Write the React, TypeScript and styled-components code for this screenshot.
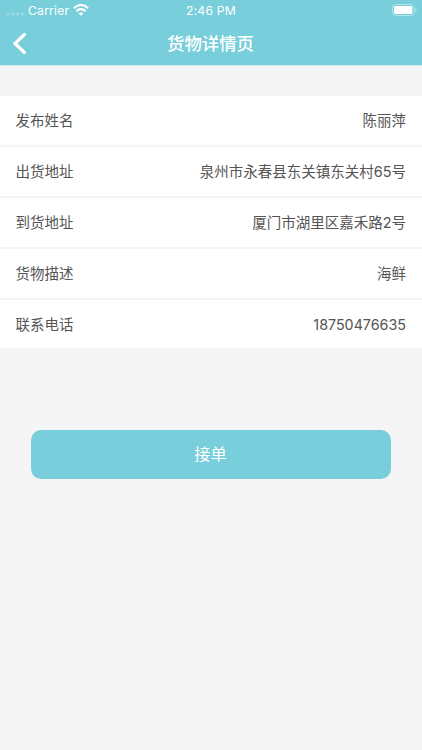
import React from "react";
import styled, { createGlobalStyle } from "styled-components";

const GlobalStyle = createGlobalStyle`
  * { box-sizing: border-box; }
  body { margin: 0; background: #f5f5f5; }
`;
const Screen = styled.div`
  width: 100%;
  height: 750px;
  background: #f5f5f5;
  color: #555;
  font-family: Inter, "Noto Sans CJK SC", sans-serif;
`;
const Header = styled.header`
  height: 66px;
  background: #79cedb;
  border-bottom: 1px solid #cfe9ee;
  color: #fff;
`;
const StatusBar = styled.div`
  height: 20px;
  padding: 0 4px 0 6px;
  display: grid;
  grid-template-columns: 1fr auto 1fr;
  align-items: center;
  font-size: 12.2px;
  line-height: 18px;
  letter-spacing: 0.2px;
`;
const Carrier = styled.div`
  display: flex;
  align-items: center;
`;
const CarrierName = styled.span`
  padding-top: 2px;
  margin: 0 4px;
`;
const Clock = styled.span`
  padding: 2px 2px 0 0;
`;
const Power = styled.div`
  display: flex;
  justify-content: flex-end;
`;
const NavBar = styled.div`
  height: 45px;
  display: grid;
  grid-template-columns: 60px 1fr 60px;
  align-items: center;
`;
const Back = styled.button`
  border: 0;
  padding: 0 0 0 12px;
  height: 45px;
  background: none;
  display: flex;
  align-items: center;
`;
const Title = styled.h1`
  margin: 0;
  padding: 2px 1px 0 0;
  text-align: center;
  font-size: 17.4px;
  font-weight: 500;
  line-height: 43px;
`;
const List = styled.dl`
  margin: 30px 0 0;
  display: grid;
  gap: 2px;
`;
const Row = styled.div`
  height: 49px;
  padding: 0 16px 0 15.5px;
  background: #fff;
  display: flex;
  justify-content: space-between;
  font-size: 14.5px;
  line-height: 49px;

  &:last-child { height: 48px; }
`;
const Label = styled.dt``;
const Value = styled.dd<{ $phone: boolean }>`
  margin: 0;
  font-size: ${(p) => (p.$phone ? "14.3px" : "14.5px")};
`;
const Accept = styled.button`
  display: block;
  width: 360px;
  height: 49px;
  margin: 82px auto 0;
  padding: 0 1px 0 0;
  border: 0;
  border-radius: 10px;
  background: #79cedb;
  color: #fff;
  font: 400 16.2px/49px Inter, "Noto Sans CJK SC", sans-serif;
`;

const rows = [
  { label: "发布姓名", value: "陈丽萍" },
  { label: "出货地址", value: "泉州市永春县东关镇东关村65号" },
  { label: "到货地址", value: "厦门市湖里区嘉禾路2号" },
  { label: "货物描述", value: "海鲜" },
  { label: "联系电话", value: "18750476635", phone: true },
];

export default function App() {
  return (
    <Screen>
      <GlobalStyle />
      <Header>
        <StatusBar>
          <Carrier>
            <svg width="18" height="12" fill="#fff" fillOpacity=".25">
              {[2, 6.7, 11.4, 16.1].map((x) => <circle key={x} cx={x} cy="10" r="1.8" />)}
            </svg>
            <CarrierName>Carrier</CarrierName>
            <svg width="16" height="12" viewBox="0 0 16 12" fill="none" stroke="#fff" strokeWidth="2.2">
              <path d="M1 4.3C5-.1 11-.1 15 4.3M3.5 7.2C6 4.5 10 4.5 12.5 7.2" />
              <path d="M5.7 9.4Q8 7.3 10.3 9.4L8 11.7Z" fill="#fff" stroke="none" />
            </svg>
          </Carrier>
          <Clock>2:46 PM</Clock>
          <Power>
            <svg width="26" height="12" viewBox="0 0 26 12">
              <rect x=".5" y=".5" width="21.5" height="11" rx="3" fill="none" stroke="#fff" strokeOpacity=".4" />
              <rect x="2" y="2" width="18.3" height="8" rx="1.5" fill="#fff" />
              <path d="M23.2 4v4q1.5-.6 1.5-2T23.2 4" fill="#fff" fillOpacity=".45" />
            </svg>
          </Power>
        </StatusBar>
        <NavBar>
          <Back aria-label="返回">
            <svg width="15" height="22" viewBox="0 0 15 22" fill="none" stroke="#fff" strokeWidth="3.2" strokeLinecap="round">
              <path d="M12.4 2.5 3 11.5l9.4 9" />
            </svg>
          </Back>
          <Title>货物详情页</Title>
        </NavBar>
      </Header>
      <List>
        {rows.map(({ label, value, phone = false }) => (
          <Row key={label}>
            <Label>{label}</Label>
            <Value $phone={phone}>{value}</Value>
          </Row>
        ))}
      </List>
      <Accept>接单</Accept>
    </Screen>
  );
}
